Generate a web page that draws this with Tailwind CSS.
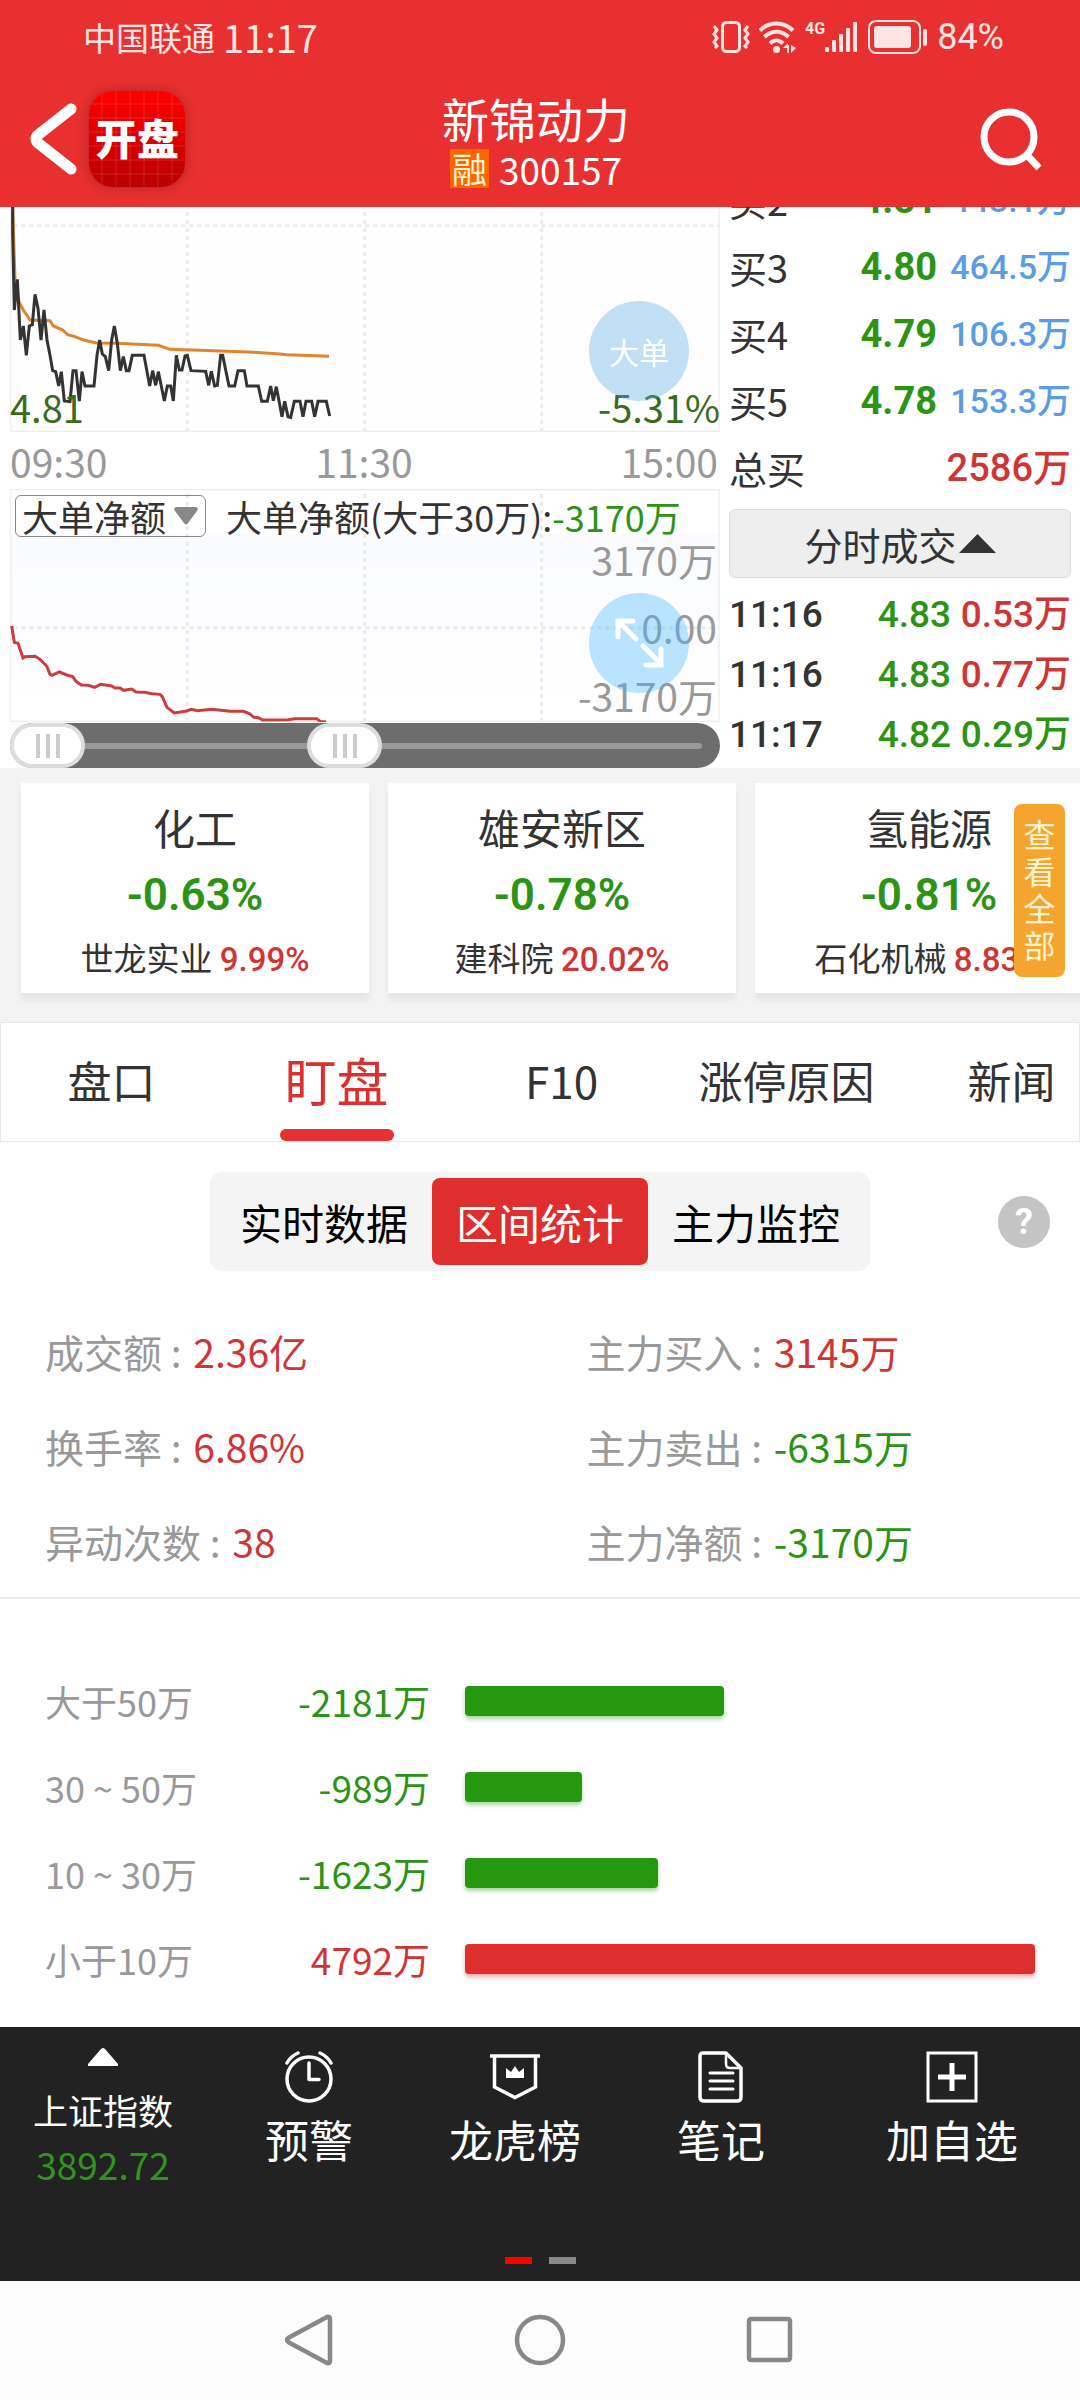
<!DOCTYPE html>
<html lang="zh-CN">
<head>
  <meta charset="UTF-8">
  <meta name="viewport" content="width=device-width, initial-scale=1.0">
  <title>新锦动力 300157</title>
  <script src="https://cdn.jsdelivr.net/npm/@tailwindcss/browser@4"></script>
</head>
<body class="bg-white text-[#333] font-['Noto_Sans_CJK_SC',sans-serif] overflow-x-hidden">

  <!-- Header -->
  <header class="bg-[#e83030] text-white">
    <div class="h-[74px] pl-[83px] pr-[76px] flex items-center justify-between text-[#ffe4e4]">
      <div class="flex items-center gap-2">
        <span class="text-[33px] leading-[40px]">中国联通</span>
        <span class="text-[38px] leading-[40px]">11:17</span>
      </div>
      <div class="flex items-center gap-[9px]">
        <svg class="w-[38px] h-8" viewBox="0 0 38 32" fill="none" stroke="currentColor" stroke-width="3">
          <rect x="10.500" y="1.500" width="17" height="29" rx="4"/>
          <path d="M2 5l3 4-3 4 3 4-3 4 3 4-2 2M36 5l-3 4 3 4-3 4 3 4-3 4 2 2"/>
        </svg>
        <svg class="w-[37px] h-8" viewBox="0 0 37 32" fill="none" stroke="currentColor" stroke-width="4">
          <path d="M1 9.500C10 0 25 0 34 9.500M5.500 16c7-7 17-7 24 0M11 22.500c4-4 9-4 13 0"/>
          <circle cx="17.500" cy="28.500" r="3.500" fill="currentColor" stroke="none"/>
          <path d="M24 27h5v-5zM28 24v8h2v-8zM32 24v8l5-5z" fill="currentColor" stroke="none"/>
        </svg>
        <div class="flex items-start">
          <span class="text-base leading-4 font-bold font-[Roboto]">4G</span>
          <svg class="w-[34px] h-8" viewBox="0 0 34 32" fill="currentColor">
            <rect x="0" y="26" width="4" height="5" rx="1"/>
            <rect x="7" y="19" width="4" height="12" rx="1"/>
            <rect x="14" y="13" width="4" height="18" rx="1"/>
            <rect x="21" y="7" width="4" height="24" rx="1"/>
            <rect x="28" y="1" width="4" height="30" rx="1"/>
          </svg>
        </div>
        <svg class="w-[60px] h-[34px]" viewBox="0 0 60 34" fill="none" stroke="currentColor" stroke-width="2">
          <rect x="1" y="1" width="51" height="32" rx="7"/>
          <rect x="6" y="6" width="37" height="22" rx="3" fill="currentColor" stroke="none"/>
          <rect x="55" y="9" width="4" height="17" rx="2" fill="currentColor" stroke="none"/>
        </svg>
        <span class="text-[36px] leading-[40px] font-[Roboto]">84%</span>
      </div>
    </div>

    <div class="h-[133px] pb-1 pl-[30px] pr-[38px] grid grid-cols-[1fr_auto_1fr] items-center">
      <div class="flex items-center gap-3">
        <button type="button" aria-label="返回">
          <svg class="w-[47px] h-[74px]" viewBox="0 0 47 74" fill="none" stroke="currentColor" stroke-width="11" stroke-linecap="round" stroke-linejoin="round">
            <path d="M41 7L8 33q-4 4 0 8l33 26"/>
          </svg>
        </button>
        <a href="#" class="size-24 rounded-3xl flex items-center justify-center text-[42px] leading-[48px] pb-1 font-black bg-[linear-gradient(90deg,transparent_12px,#ffffff20_13px,transparent_14px),linear-gradient(transparent_12px,#ffffff20_13px,transparent_14px),linear-gradient(#ff0000,#b80000)] bg-[length:14px_100%,100%_14px,100%_100%] shadow-[0_0_12px_#00000040]">开盘</a>
      </div>
      <div class="text-center pt-1">
        <h1 class="text-[47px] leading-[50px]">新锦动力</h1>
        <p class="mt-1.5 text-[37px] leading-[40px] flex items-center justify-center gap-2.5">
          <span class="bg-[#ff6600] text-[#fff4d0] text-[35px] px-0.5 h-[39px] leading-[38px]">融</span>300157
        </p>
      </div>
      <button type="button" aria-label="搜索" class="justify-self-end">
        <svg class="w-[62px] h-[62px]" viewBox="0 0 62 62" fill="none" stroke="currentColor" stroke-width="7">
          <circle cx="29" cy="29" r="25"/>
          <path d="M46 46l13 14"/>
        </svg>
      </button>
    </div>
  </header>

  <main>
    <!-- Charts + order book -->
    <section class="grid grid-cols-[2fr_1fr]">
      <div class="pl-2.5">
        <div class="relative h-[225px] text-[38px] leading-[44px] text-[#3b6a1b]">
          <svg class="absolute inset-0 w-full h-full" viewBox="30 21 2130 675" preserveAspectRatio="none" fill="none">
            <rect x="32" y="-10" width="2125" height="704" fill="#fefefe" stroke="#eeeeee" stroke-width="4"/>
            <path d="M40 77H2160M562 36V694M1094 36V694M1625 36V694" stroke="#ebebeb" stroke-width="9" stroke-dasharray="12 12"/>
            <polyline stroke="#e0862a" stroke-width="9" points="38,21 45,240 58,308 70,330 90,360 150,362 160,378 188,390 203,404 225,410 250,420 290,429 350,430 475,436 510,448 600,451 760,457 830,461 860,464 987,469"/>
            <polyline stroke="#333" stroke-width="9" points="38,21 38,100 43,330 52,238 61,420 70,378 79,466 88,378 97,374 105,283 114,325 123,420 132,330 141,420 150,466 158,512 167,515 176,558 184,515 193,603 210,605 219,512 228,512 238,603 246,515 255,558 282,558 291,466 299,420 307,462 316,470 326,512 335,420 343,378 352,430 361,512 370,470 379,512 387,512 397,466 432,466 449,558 458,512 467,556 475,515 493,603 502,558 512,558 520,603 529,466 538,510 546,510 555,468 562,466 573,512 617,514 626,556 634,514 644,558 652,556 662,466 668,466 687,558 704,558 714,512 733,512 741,558 775,558 785,604 802,604 812,558 820,602 829,560 846,650 854,604 864,650 872,652 883,604 900,604 909,650 918,604 935,604 944,650 954,604 979,604 989,648"/>
          </svg>
          <span class="absolute left-0 bottom-[3px]">4.81</span>
          <span class="absolute right-0 bottom-[3px]">-5.31%</span>
          <button type="button" class="absolute right-[31px] top-[94px] size-[100px] rounded-full bg-[#4fa8e8]/35 text-white text-[30px]">大单</button>
        </div>

        <div class="h-[57px] pr-0.5 flex items-center justify-between text-[39px] leading-[44px] text-[#999]">
          <span>09:30</span><span>11:30</span><span>15:00</span>
        </div>

        <div class="relative h-[233px]">
          <svg class="absolute inset-0 w-full h-full" viewBox="30 27 2130 699" preserveAspectRatio="none" fill="none">
            <defs>
              <linearGradient id="fade" x1="0" y1="0" x2="0" y2="1">
                <stop offset="0" stop-color="#fafbff"/><stop offset="1" stop-color="#ffffff"/>
              </linearGradient>
            </defs>
            <rect x="32" y="162" width="2125" height="500" fill="url(#fade)"/>
            <rect x="32" y="29" width="2125" height="695" stroke="#eeeeee" stroke-width="4"/>
            <path d="M40 443H2150M562 42V722M1094 42V722M1625 42V722" stroke="#ebebeb" stroke-width="9" stroke-dasharray="12 12"/>
            <polyline stroke="#cc3d3d" stroke-width="9" points="35,438 43,487 54,490 69,534 75,530 105,529 120,538 140,558 150,583 156,586 178,576 200,585 218,590 228,604 244,615 265,616 284,622 302,613 335,618 345,624 360,624 371,631 395,627 408,636 435,637 455,641 480,643 487,650 501,682 523,699 560,693 574,688 592,692 635,688 690,694 730,694 748,701 762,712 775,713 788,720 865,719 885,716 950,716 962,725 978,725"/>
          </svg>
          <div class="relative h-12 pt-1.5 pl-[5px] flex items-start gap-5 text-[36px] leading-[42px]">
            <div class="relative">
              <select aria-label="指标" class="appearance-none block w-[191px] h-[42px] pl-1.5 border border-[#888] rounded-md leading-[40px]">
                <option>大单净额</option>
              </select>
              <svg class="absolute right-2 top-3 w-6 h-[18px] pointer-events-none" viewBox="0 0 24 18" fill="#888"><path d="M2 0h20q3 1 1 4l-9 12q-2 3-4 0L1 4Q-1 1 2 0z"/></svg>
            </div>
            <p class="whitespace-nowrap">大单净额(大于30万):<span class="text-[#2c9315]">-3170万</span></p>
          </div>
          <div class="relative pr-[3px] flex flex-col gap-6 text-right text-[39px] leading-[44px] text-[#999]">
            <span>3170万</span><span>0.00</span><span>-3170万</span>
          </div>
          <button type="button" aria-label="全屏" class="absolute right-[31px] top-[104px] size-[100px] rounded-full bg-[#45b6ff]/37">
            <svg class="size-full" viewBox="0 0 100 100" fill="none" stroke="#fff" stroke-width="5" stroke-linecap="round">
              <path d="M47 46L30 29M29 44V28h15M54 53l17 17M57 72h15V56"/>
            </svg>
          </button>
        </div>

        <!-- Range slider -->
        <div class="relative mt-px h-[45px] rounded-full bg-[#6d6d6d] flex items-center pl-10 pr-[18px]">
          <div class="w-full h-1.5 rounded-full bg-[#999]"></div>
          <input type="range" aria-label="开始" min="0" max="1000" value="0" class="absolute inset-0 m-0 w-full h-full appearance-none bg-transparent pointer-events-none [&::-webkit-slider-thumb]:appearance-none [&::-webkit-slider-thumb]:pointer-events-auto [&::-webkit-slider-thumb]:w-[75px] [&::-webkit-slider-thumb]:h-[45px] [&::-webkit-slider-thumb]:rounded-full [&::-webkit-slider-thumb]:border-4 [&::-webkit-slider-thumb]:border-[#ddd] [&::-webkit-slider-thumb]:bg-white [&::-webkit-slider-thumb]:bg-[linear-gradient(90deg,#ccc_4px,#fff_4px,#fff_10px,#ccc_10px,#ccc_14px,#fff_14px,#fff_20px,#ccc_20px)] [&::-webkit-slider-thumb]:bg-[length:24px_24px] [&::-webkit-slider-thumb]:bg-center [&::-webkit-slider-thumb]:bg-no-repeat">
          <input type="range" aria-label="结束" min="0" max="1000" value="468" class="absolute inset-0 m-0 w-full h-full appearance-none bg-transparent pointer-events-none [&::-webkit-slider-thumb]:appearance-none [&::-webkit-slider-thumb]:pointer-events-auto [&::-webkit-slider-thumb]:w-[75px] [&::-webkit-slider-thumb]:h-[45px] [&::-webkit-slider-thumb]:rounded-full [&::-webkit-slider-thumb]:border-4 [&::-webkit-slider-thumb]:border-[#ddd] [&::-webkit-slider-thumb]:bg-white [&::-webkit-slider-thumb]:bg-[linear-gradient(90deg,#ccc_4px,#fff_4px,#fff_10px,#ccc_10px,#ccc_14px,#fff_14px,#fff_20px,#ccc_20px)] [&::-webkit-slider-thumb]:bg-[length:24px_24px] [&::-webkit-slider-thumb]:bg-center [&::-webkit-slider-thumb]:bg-no-repeat">
        </div>
      </div>

      <!-- Order book -->
      <div class="px-[9px] overflow-hidden whitespace-nowrap">
        <table class="w-full -mt-[41px] text-[38px] leading-[44px]">
          <tbody>
            <tr class="h-[67px]">
              <td>买2</td>
              <td class="text-right text-[#2c9315] font-bold font-[Roboto]">4.81</td>
              <td class="w-[134px] text-right text-[34px] text-[#5a9ce6] font-medium font-[Roboto,'Noto_Sans_CJK_SC']">443.1万</td>
            </tr>
            <tr class="h-[67px]">
              <td>买3</td>
              <td class="text-right text-[#2c9315] font-bold font-[Roboto]">4.80</td>
              <td class="w-[134px] text-right text-[34px] text-[#5a9ce6] font-medium font-[Roboto,'Noto_Sans_CJK_SC']">464.5万</td>
            </tr>
            <tr class="h-[67px]">
              <td>买4</td>
              <td class="text-right text-[#2c9315] font-bold font-[Roboto]">4.79</td>
              <td class="w-[134px] text-right text-[34px] text-[#5a9ce6] font-medium font-[Roboto,'Noto_Sans_CJK_SC']">106.3万</td>
            </tr>
            <tr class="h-[67px]">
              <td>买5</td>
              <td class="text-right text-[#2c9315] font-bold font-[Roboto]">4.78</td>
              <td class="w-[134px] text-right text-[34px] text-[#5a9ce6] font-medium font-[Roboto,'Noto_Sans_CJK_SC']">153.3万</td>
            </tr>
            <tr class="h-[67px]">
              <td>总买</td>
              <td colspan="2" class="text-right text-[#d03535] font-medium font-[Roboto,'Noto_Sans_CJK_SC']">2586万</td>
            </tr>
          </tbody>
        </table>
        <button type="button" class="mt-2 w-full h-[69px] rounded-md border border-[#ddd] bg-[#eee] text-[38px] leading-[44px] flex items-center justify-center gap-0.5">
          分时成交<svg class="w-[37px] h-[19px]" viewBox="0 0 37 19" fill="#333"><path d="M18.500 0L37 19H0z"/></svg>
        </button>
        <table class="w-full mt-[7px] text-[37px] leading-[44px] font-medium font-[Roboto,'Noto_Sans_CJK_SC']">
          <tbody>
            <tr class="h-[60px]">
              <td>11:16</td>
              <td class="text-right text-[#2c9315]">4.83</td>
              <td class="w-[120px] text-right text-[#d03535]">0.53万</td>
            </tr>
            <tr class="h-[60px]">
              <td>11:16</td>
              <td class="text-right text-[#2c9315]">4.83</td>
              <td class="w-[120px] text-right text-[#d03535]">0.77万</td>
            </tr>
            <tr class="h-[60px]">
              <td>11:17</td>
              <td class="text-right text-[#2c9315]">4.82</td>
              <td class="w-[120px] text-right text-[#2c9315]">0.29万</td>
            </tr>
          </tbody>
        </table>
      </div>
    </section>

    <!-- Sector cards -->
    <section class="relative bg-[#f3f3f3]">
      <div class="flex gap-[19px] pl-[21px] pt-[15px] pb-[29px] overflow-hidden text-center whitespace-nowrap">
        <a href="#" class="block shrink-0 w-[348px] pt-[14px] pb-3 bg-white shadow-[0_7px_6px_#0000000f]">
          <p class="text-[42px] leading-[60px]">化工</p>
          <p class="mt-2 text-[44px] leading-[60px] text-[#2c9315] font-semibold font-[Roboto]">-0.63%</p>
          <p class="mt-3 h-10 text-[33px] leading-[40px]">世龙实业 <span class="text-[#d03535] font-medium font-[Roboto]">9.99%</span></p>
        </a>
        <a href="#" class="block shrink-0 w-[348px] pt-[14px] pb-4 bg-white shadow-[0_7px_6px_#0000000f]">
          <p class="text-[42px] leading-[60px]">雄安新区</p>
          <p class="mt-2 text-[44px] leading-[60px] text-[#2c9315] font-semibold font-[Roboto]">-0.78%</p>
          <p class="mt-3 h-10 text-[33px] leading-[40px]">建科院 <span class="text-[#d03535] font-medium font-[Roboto]">20.02%</span></p>
        </a>
        <a href="#" class="block shrink-0 w-[348px] pt-[14px] pb-4 bg-white shadow-[0_7px_6px_#0000000f]">
          <p class="text-[42px] leading-[60px]">氢能源</p>
          <p class="mt-2 text-[44px] leading-[60px] text-[#2c9315] font-semibold font-[Roboto]">-0.81%</p>
          <p class="mt-3 h-10 text-[33px] leading-[40px]">石化机械 <span class="text-[#d03535] font-medium font-[Roboto]">8.83%</span></p>
        </a>
      </div>
      <button type="button" class="absolute right-[15px] top-9 w-[51px] h-[173px] px-2 pb-1 rounded-lg bg-[#f5a430] text-[#fff4d0] text-[32px] leading-[37px] break-all">查看全部</button>
    </section>

    <!-- Tabs -->
    <nav class="h-[120px] flex overflow-hidden border border-[#e8e8e8] text-[44px] whitespace-nowrap">
      <a href="#" class="shrink-0 w-[225px] pb-1 pr-1 flex items-center justify-center">盘口</a>
      <a href="#" class="relative shrink-0 w-[225px] pb-1 pr-1 flex items-center justify-center text-[52px] text-[#dc3030]">盯盘
        <span class="absolute bottom-0 w-[114px] h-3 rounded-full bg-[#e83030]"></span>
      </a>
      <a href="#" class="shrink-0 w-[225px] pb-1 pr-1 flex items-center justify-center">F10</a>
      <a href="#" class="shrink-0 w-[225px] pb-1 pr-1 flex items-center justify-center">涨停原因</a>
      <a href="#" class="shrink-0 w-[225px] pb-1 pr-1 flex items-center justify-center">新闻</a>
    </nav>

    <!-- Segmented switch -->
    <div class="relative mt-[30px] flex justify-center items-center text-black text-[42px] leading-[48px]">
      <div class="flex p-1.5 rounded-xl bg-[#f4f4f4]">
        <button type="button" class="w-[216px] h-[87px]">实时数据</button>
        <button type="button" class="w-[216px] h-[87px] rounded-lg bg-[#df2e2e] text-white">区间统计</button>
        <button type="button" class="w-[216px] h-[87px]">主力监控</button>
      </div>
      <button type="button" aria-label="帮助" class="absolute right-[30px] size-[52px] rounded-full bg-[#c4c4c4] text-white text-[36px] leading-[52px] font-bold font-[Roboto]">?</button>
    </div>

    <!-- Stats -->
    <dl class="pt-[33px] pb-2 grid grid-cols-2 pl-[45px] text-[39px] leading-[95px] border-b-2 border-[#ebebeb] whitespace-pre">
      <div class="flex gap-[3px]"><dt class="text-[#999]">成交额 : </dt><dd class="text-[#d03535]">2.36亿</dd></div>
      <div class="flex gap-[3px] pl-6"><dt class="text-[#999]">主力买入 : </dt><dd class="text-[#d03535]">3145万</dd></div>
      <div class="flex gap-[3px]"><dt class="text-[#999]">换手率 : </dt><dd class="text-[#d03535]">6.86%</dd></div>
      <div class="flex gap-[3px] pl-6"><dt class="text-[#999]">主力卖出 : </dt><dd class="text-[#2c9315]">-6315万</dd></div>
      <div class="flex gap-[3px]"><dt class="text-[#999]">异动次数 : </dt><dd class="text-[#d03535]">38</dd></div>
      <div class="flex gap-[3px] pl-6"><dt class="text-[#999]">主力净额 : </dt><dd class="text-[#2c9315]">-3170万</dd></div>
    </dl>

    <!-- Net amount by order size -->
    <section class="pt-[59px] pb-[25px] pl-[45px] pr-[45px] text-[36px] leading-[44px]">
      <div class="h-[86px] flex items-center">
        <span class="w-[185px] text-[#999]">大于50万</span>
        <span class="w-[200px] text-right text-[37px] text-[#2c9315]">-2181万</span>
        <div class="ml-[35px] flex-1"><div class="h-[30px] rounded-sm bg-[#25980f] shadow-[0_3px_4px_#25980f66]" style="width:45.5%"></div></div>
      </div>
      <div class="h-[86px] flex items-center">
        <span class="w-[185px] text-[#999]">30 ~ 50万</span>
        <span class="w-[200px] text-right text-[37px] text-[#2c9315]">-989万</span>
        <div class="ml-[35px] flex-1"><div class="h-[30px] rounded-sm bg-[#25980f] shadow-[0_3px_4px_#25980f66]" style="width:20.6%"></div></div>
      </div>
      <div class="h-[86px] flex items-center">
        <span class="w-[185px] text-[#999]">10 ~ 30万</span>
        <span class="w-[200px] text-right text-[37px] text-[#2c9315]">-1623万</span>
        <div class="ml-[35px] flex-1"><div class="h-[30px] rounded-sm bg-[#25980f] shadow-[0_3px_4px_#25980f66]" style="width:33.9%"></div></div>
      </div>
      <div class="h-[86px] flex items-center">
        <span class="w-[185px] text-[#999]">小于10万</span>
        <span class="w-[200px] text-right text-[37px] text-[#d03535]">4792万</span>
        <div class="ml-[35px] flex-1"><div class="h-[30px] rounded-sm bg-[#df2e2e] shadow-[0_3px_4px_#df2e2e66]" style="width:100%"></div></div>
      </div>
    </section>
  </main>

  <!-- Bottom toolbar -->
  <footer>
    <div class="bg-[#222] text-white pt-[21px] pb-[17px]">
      <div class="grid grid-cols-[1fr_1fr_1fr_1fr_256px] h-[209px] text-[44px] leading-[52px]">
        <a href="#" class="flex flex-col items-center">
          <svg class="w-[30px] h-[18px]" viewBox="0 0 30 18" fill="currentColor"><path d="M15 0q1 0 2 1l13 15v2H0v-2L13 1q1-1 2-1z"/></svg>
          <span class="mt-[22px] text-[35px] leading-[44px]">上证指数</span>
          <span class="mt-2.5 text-[37px] leading-[44px] text-[#339322]">3892.72</span>
        </a>
        <a href="#" class="flex flex-col items-center pt-[3px]">
          <svg class="w-[52px] h-[52px]" viewBox="0 0 52 52" fill="none" stroke="currentColor" stroke-width="3.500" stroke-linecap="round" stroke-linejoin="round">
            <circle cx="26" cy="28" r="22"/>
            <path d="M26 12v16.500h10"/>
            <path d="M4 12Q8 5 15 2M48 12Q44 5 37 2"/>
          </svg>
          <span class="mt-2.5">预警</span>
        </a>
        <a href="#" class="flex flex-col items-center pt-[3px]">
          <svg class="w-[52px] h-[52px]" viewBox="0 0 52 52" fill="none" stroke="currentColor" stroke-width="3.500">
            <path d="M1 5h50M5.500 5v31L26 46.500 46.500 36V5"/>
            <path d="M17 27V17l5 4 4-6 4 6 5-4v10z" fill="currentColor" stroke="none"/>
          </svg>
          <span class="mt-2.5">龙虎榜</span>
        </a>
        <a href="#" class="flex flex-col items-center pt-[3px]">
          <svg class="w-[52px] h-[52px]" viewBox="0 0 52 52" fill="none" stroke="currentColor" stroke-width="3.500" stroke-linecap="round" stroke-linejoin="round">
            <path d="M8 2h23l15 15v29q0 4-4 4H9q-4 0-4-4V5q0-3 3-3z"/>
            <path d="M31 3v10q0 4 4 4h10" stroke-width="2.500"/>
            <path d="M15 22h23M15 30h23M15 38h23" stroke-width="3"/>
          </svg>
          <span class="mt-2.5">笔记</span>
        </a>
        <a href="#" class="flex flex-col items-center pt-[3px]">
          <svg class="w-[52px] h-[52px]" viewBox="0 0 52 52" fill="none" stroke="currentColor" stroke-width="3">
            <rect x="2" y="2" width="48" height="48"/>
            <path d="M26 12v28M12 26h28" stroke-width="5"/>
          </svg>
          <span class="mt-2.5">加自选</span>
        </a>
      </div>
      <div class="flex justify-center gap-[17px]">
        <span class="w-[27px] h-[7px] bg-[#fe0000]"></span>
        <span class="w-[27px] h-[7px] bg-[#888]"></span>
      </div>
    </div>
    <div class="bg-[#fcfcfc] h-[118px]">
      <div class="max-w-[690px] mx-auto h-full grid grid-cols-3 place-items-center">
        <button type="button" aria-label="后退"><svg class="size-[52px]" viewBox="0 0 52 52" fill="none" stroke="#888" stroke-width="4.500" stroke-linejoin="round"><path d="M5 23.500L43 3q3-1 3 2v42q0 3-3 2L5 28.500q-4-2.500 0-5z"/></svg></button>
        <button type="button" aria-label="主页"><svg class="size-[52px]" viewBox="0 0 52 52" fill="none" stroke="#888" stroke-width="4.500"><circle cx="26" cy="26" r="23"/></svg></button>
        <button type="button" aria-label="最近任务"><svg class="size-[52px]" viewBox="0 0 52 52" fill="none" stroke="#888" stroke-width="4.500"><rect x="5" y="5" width="41" height="41" rx="2"/></svg></button>
      </div>
    </div>
  </footer>
</body>
</html>
